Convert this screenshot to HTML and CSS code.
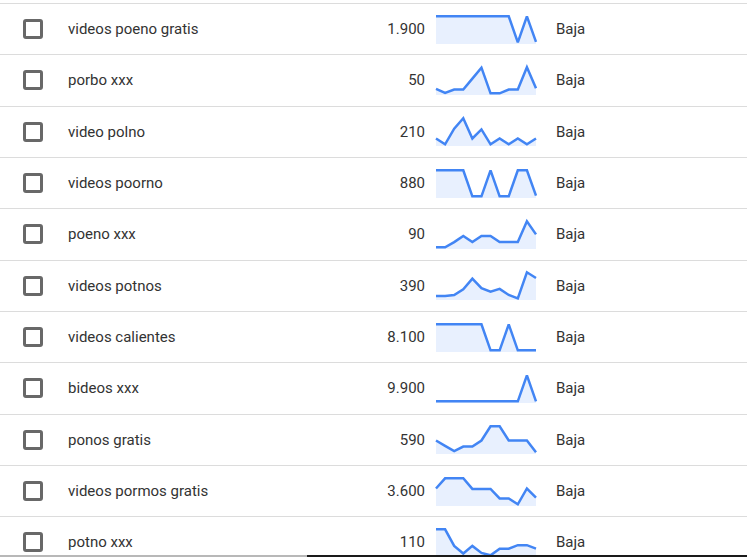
FILE: index.html
```html
<!DOCTYPE html>
<html lang="es">
<head>
<meta charset="utf-8">
<title>Ideas para palabras clave</title>
<link rel="stylesheet" href="styles.css">
</head>
<body>
<div class="table">
  <div class="row">
    <div class="check-cell"><span class="box"></span></div>
    <div class="kw">videos poeno gratis</div>
    <div class="num">1.900</div>
    <svg class="spark" viewBox="0 0 100 29" preserveAspectRatio="none"><polygon class="area" points="0,1.3 9.09,1.3 18.18,1.3 27.27,1.3 36.36,1.3 45.45,1.3 54.55,1.3 63.64,1.3 72.73,1.3 81.82,27.3 90.91,1.3 100,26.8 100,29 0,29"/><polyline class="line" points="0,1.3 9.09,1.3 18.18,1.3 27.27,1.3 36.36,1.3 45.45,1.3 54.55,1.3 63.64,1.3 72.73,1.3 81.82,27.3 90.91,1.3 100,26.8"/></svg>
    <div class="comp">Baja</div>
  </div>
  <div class="row">
    <div class="check-cell"><span class="box"></span></div>
    <div class="kw">porbo xxx</div>
    <div class="num">50</div>
    <svg class="spark" viewBox="0 0 100 29" preserveAspectRatio="none"><polygon class="area" points="0,22.8 9.09,26.9 18.18,23.5 27.27,23.5 36.36,12.6 45.45,1.7 54.55,27.3 63.64,27.3 72.73,23.5 81.82,23.5 90.91,1.3 100,22.2 100,29 0,29"/><polyline class="line" points="0,22.8 9.09,26.9 18.18,23.5 27.27,23.5 36.36,12.6 45.45,1.7 54.55,27.3 63.64,27.3 72.73,23.5 81.82,23.5 90.91,1.3 100,22.2"/></svg>
    <div class="comp">Baja</div>
  </div>
  <div class="row">
    <div class="check-cell"><span class="box"></span></div>
    <div class="kw">video polno</div>
    <div class="num">210</div>
    <svg class="spark" viewBox="0 0 100 29" preserveAspectRatio="none"><polygon class="area" points="0,21.5 9.09,27.3 18.18,11.7 27.27,1.3 36.36,21.5 45.45,12.4 54.55,27.3 63.64,21.5 72.73,27.3 81.82,21.5 90.91,27.3 100,21.5 100,29 0,29"/><polyline class="line" points="0,21.5 9.09,27.3 18.18,11.7 27.27,1.3 36.36,21.5 45.45,12.4 54.55,27.3 63.64,21.5 72.73,27.3 81.82,21.5 90.91,27.3 100,21.5"/></svg>
    <div class="comp">Baja</div>
  </div>
  <div class="row">
    <div class="check-cell"><span class="box"></span></div>
    <div class="kw">videos poorno</div>
    <div class="num">880</div>
    <svg class="spark" viewBox="0 0 100 29" preserveAspectRatio="none"><polygon class="area" points="0,1.3 9.09,1.3 18.18,1.3 27.27,1.3 36.36,27.3 45.45,27.3 54.55,1.3 63.64,27.3 72.73,27.3 81.82,1.3 90.91,1.3 100,26.6 100,29 0,29"/><polyline class="line" points="0,1.3 9.09,1.3 18.18,1.3 27.27,1.3 36.36,27.3 45.45,27.3 54.55,1.3 63.64,27.3 72.73,27.3 81.82,1.3 90.91,1.3 100,26.6"/></svg>
    <div class="comp">Baja</div>
  </div>
  <div class="row">
    <div class="check-cell"><span class="box"></span></div>
    <div class="kw">poeno xxx</div>
    <div class="num">90</div>
    <svg class="spark" viewBox="0 0 100 29" preserveAspectRatio="none"><polygon class="area" points="0,27.3 9.09,27.3 18.18,22.1 27.27,15.9 36.36,22.1 45.45,15.9 54.55,15.9 63.64,22.1 72.73,22.1 81.82,22.1 90.91,1.3 100,14.4 100,29 0,29"/><polyline class="line" points="0,27.3 9.09,27.3 18.18,22.1 27.27,15.9 36.36,22.1 45.45,15.9 54.55,15.9 63.64,22.1 72.73,22.1 81.82,22.1 90.91,1.3 100,14.4"/></svg>
    <div class="comp">Baja</div>
  </div>
  <div class="row">
    <div class="check-cell"><span class="box"></span></div>
    <div class="kw">videos potnos</div>
    <div class="num">390</div>
    <svg class="spark" viewBox="0 0 100 29" preserveAspectRatio="none"><polygon class="area" points="0,25 9.09,25 18.18,24 27.27,18.2 36.36,7.7 45.45,17.2 54.55,20.6 63.64,17.9 72.73,24 81.82,27.3 90.91,1.3 100,7 100,29 0,29"/><polyline class="line" points="0,25 9.09,25 18.18,24 27.27,18.2 36.36,7.7 45.45,17.2 54.55,20.6 63.64,17.9 72.73,24 81.82,27.3 90.91,1.3 100,7"/></svg>
    <div class="comp">Baja</div>
  </div>
  <div class="row">
    <div class="check-cell"><span class="box"></span></div>
    <div class="kw">videos calientes</div>
    <div class="num">8.100</div>
    <svg class="spark" viewBox="0 0 100 29" preserveAspectRatio="none"><polygon class="area" points="0,1.3 9.09,1.3 18.18,1.3 27.27,1.3 36.36,1.3 45.45,1.3 54.55,27.3 63.64,27.3 72.73,1.3 81.82,27.3 90.91,27.3 100,27.3 100,29 0,29"/><polyline class="line" points="0,1.3 9.09,1.3 18.18,1.3 27.27,1.3 36.36,1.3 45.45,1.3 54.55,27.3 63.64,27.3 72.73,1.3 81.82,27.3 90.91,27.3 100,27.3"/></svg>
    <div class="comp">Baja</div>
  </div>
  <div class="row">
    <div class="check-cell"><span class="box"></span></div>
    <div class="kw">bideos xxx</div>
    <div class="num">9.900</div>
    <svg class="spark" viewBox="0 0 100 29" preserveAspectRatio="none"><polygon class="area" points="0,27.3 9.09,27.3 18.18,27.3 27.27,27.3 36.36,27.3 45.45,27.3 54.55,27.3 63.64,27.3 72.73,27.3 81.82,27.3 90.91,1.3 100,27.3 100,29 0,29"/><polyline class="line" points="0,27.3 9.09,27.3 18.18,27.3 27.27,27.3 36.36,27.3 45.45,27.3 54.55,27.3 63.64,27.3 72.73,27.3 81.82,27.3 90.91,1.3 100,27.3"/></svg>
    <div class="comp">Baja</div>
  </div>
  <div class="row">
    <div class="check-cell"><span class="box"></span></div>
    <div class="kw">ponos gratis</div>
    <div class="num">590</div>
    <svg class="spark" viewBox="0 0 100 29" preserveAspectRatio="none"><polygon class="area" points="0,15.5 9.09,20.9 18.18,26.2 27.27,21.6 36.36,21.6 45.45,15.5 54.55,1.3 63.64,1.3 72.73,15.5 81.82,15.5 90.91,15.5 100,27.3 100,29 0,29"/><polyline class="line" points="0,15.5 9.09,20.9 18.18,26.2 27.27,21.6 36.36,21.6 45.45,15.5 54.55,1.3 63.64,1.3 72.73,15.5 81.82,15.5 90.91,15.5 100,27.3"/></svg>
    <div class="comp">Baja</div>
  </div>
  <div class="row">
    <div class="check-cell"><span class="box"></span></div>
    <div class="kw">videos pormos gratis</div>
    <div class="num">3.600</div>
    <svg class="spark" viewBox="0 0 100 29" preserveAspectRatio="none"><polygon class="area" points="0,11.5 9.09,1.3 18.18,1.3 27.27,1.3 36.36,11.9 45.45,11.9 54.55,11.9 63.64,21.4 72.73,21.4 81.82,27.3 90.91,11.5 100,20.6 100,29 0,29"/><polyline class="line" points="0,11.5 9.09,1.3 18.18,1.3 27.27,1.3 36.36,11.9 45.45,11.9 54.55,11.9 63.64,21.4 72.73,21.4 81.82,27.3 90.91,11.5 100,20.6"/></svg>
    <div class="comp">Baja</div>
  </div>
  <div class="row">
    <div class="check-cell"><span class="box"></span></div>
    <div class="kw">potno xxx</div>
    <div class="num">110</div>
    <svg class="spark" viewBox="0 0 100 29" preserveAspectRatio="none"><polygon class="area" points="0,1.3 9.09,1.3 18.18,17.9 27.27,25.5 36.36,17.9 45.45,24.9 54.55,27.3 63.64,20.7 72.73,20.7 81.82,17.2 90.91,17.2 100,20.7 100,29 0,29"/><polyline class="line" points="0,1.3 9.09,1.3 18.18,17.9 27.27,25.5 36.36,17.9 45.45,24.9 54.55,27.3 63.64,20.7 72.73,20.7 81.82,17.2 90.91,17.2 100,20.7"/></svg>
    <div class="comp">Baja</div>
  </div>
</div>
<div class="edge"></div>
</body>
</html>
```
FILE: styles.css
```css
html, body {
  margin: 0;
  padding: 0;
  background: #ffffff;
  overflow: hidden;
  height: 100%;
}

body {
  font-family: Roboto, "Liberation Sans", Arial, sans-serif;
  color: #333333;
  font-size: 15px;
}

.table {
  padding-top: 3px;
}

.row {
  display: flex;
  align-items: center;
  height: 50.34px;
  border-top: 1px solid #dcdcdc;
}

.check-cell {
  width: 45px;
  padding-left: 23px;
  display: flex;
  align-items: center;
}

.box {
  display: block;
  width: 20px;
  height: 20px;
  box-sizing: border-box;
  border: 3px solid #686868;
  border-radius: 3px;
}

.kw {
  width: 290px;
  white-space: nowrap;
}

.num {
  width: 67px;
  text-align: right;
}

.spark {
  width: 100px;
  height: 29px;
  margin-left: 11px;
  overflow: visible;
}

.area {
  fill: #e8f0fe;
  stroke: none;
}

.line {
  fill: none;
  stroke: #4285f4;
  stroke-width: 2.5;
  stroke-linejoin: miter;
  stroke-miterlimit: 3;
  vector-effect: non-scaling-stroke;
}

.comp {
  margin-left: 20px;
}

.edge {
  position: fixed;
  left: 0;
  right: 0;
  bottom: 0;
  height: 2px;
  background: linear-gradient(to right, #b8b8b8 0, #b8b8b8 307px, #1a1a1a 307px, #1a1a1a 100%);
}
```
